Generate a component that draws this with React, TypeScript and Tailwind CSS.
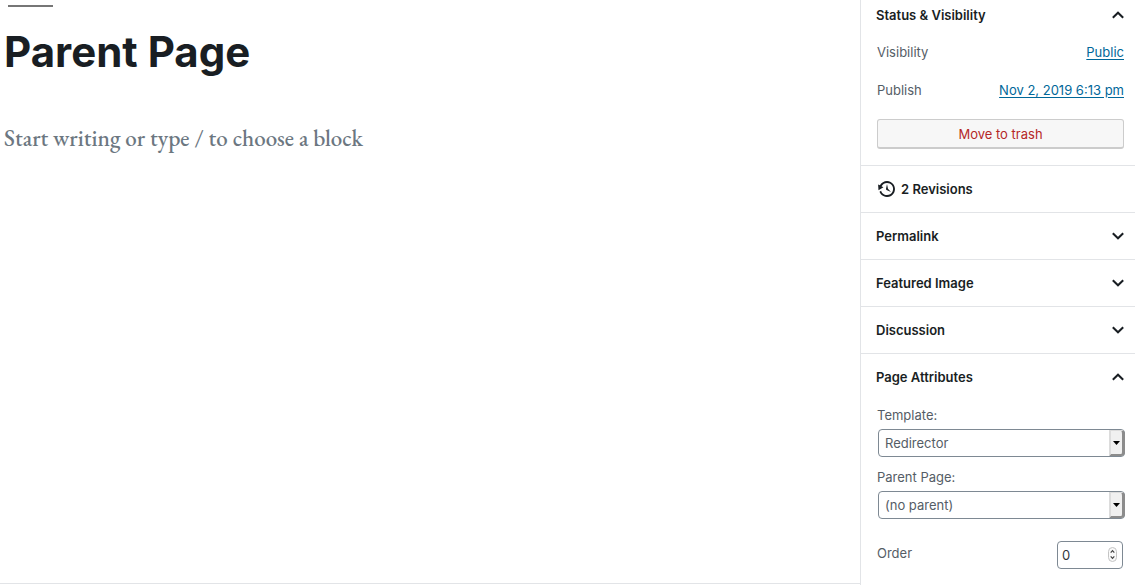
import type { ReactNode } from 'react';

function Chevron({ open = false }: { open?: boolean }) {
  return (
    <svg viewBox="0 0 12 8" className="h-2 w-3 shrink-0" fill="none" stroke="#191e23" strokeWidth="2" aria-hidden="true">
      <path d={open ? 'M.8 6.8 6 1.7l5.2 5.1' : 'M.8 1.2 6 6.3l5.2-5.1'} />
    </svg>
  );
}

function HistoryIcon() {
  return (
    <svg viewBox="0 0 20 20" className="h-5 w-5" fill="#191e23" aria-hidden="true">
      <path d="M13.65 2.88c3.93 2.01 5.48 6.84 3.47 10.77s-6.83 5.48-10.77 3.47c-1.87-.96-3.2-2.56-3.86-4.4l1.64-1.03c.45 1.57 1.52 2.95 3.08 3.76 3.01 1.54 6.69.35 8.23-2.66 1.55-3.01.36-6.69-2.65-8.24C9.78 3.01 6.1 4.2 4.56 7.21l1.88.97-4.95 3.08-.39-5.82 1.78.91C4.9 2.4 9.75.89 13.65 2.88zm-4.36 7.83C9.11 10.53 9 10.28 9 10c0-.07.03-.12.04-.19h-.01L10 5l.97 4.81L14 13l-4.5-2.12.02-.02c-.08-.04-.16-.09-.23-.15z" />
    </svg>
  );
}

function PanelHeader({ title, open = false }: { title: string; open?: boolean }) {
  return (
    <h2>
      <button
        type="button"
        aria-expanded={open}
        className="flex h-[46px] w-full items-center justify-between pr-[11px] pl-[15px] font-semibold text-[#191e23]"
      >
        {title}
        <Chevron open={open} />
      </button>
    </h2>
  );
}

function Row({ label, children }: { label: string; children: ReactNode }) {
  return (
    <div className="flex items-center justify-between">
      <span>{label}</span>
      <a href="#" className="text-[#006799] underline underline-offset-2">{children}</a>
    </div>
  );
}

function SelectField({ id, label, value }: { id: string; label: string; value: string }) {
  return (
    <div>
      <label htmlFor={id} className="block pb-1 leading-5">{label}</label>
      <div className="relative ml-px -mr-px">
        <select
          id={id}
          defaultValue={value}
          className="block h-7 w-full appearance-none rounded-sm border border-[#7e8993] bg-white pr-5 pl-1.5"
        >
          <option>{value}</option>
        </select>
        <span className="pointer-events-none absolute inset-y-px right-0 flex w-4 items-center justify-center rounded-r-sm border-t border-r-3 border-b-2 border-l-2 border-t-[#dcdcdc] border-r-[#8c8c8c] border-b-[#8c8c8c] border-l-[#dcdcdc] bg-[#f0f0f0]">
          <svg viewBox="0 0 7 4" className="h-1 w-[7px] shrink-0" fill="#000" aria-hidden="true">
            <path d="M0 0h7L3.5 4z" />
          </svg>
        </span>
      </div>
    </div>
  );
}

export default function App() {
  return (
    <div className="flex min-h-screen bg-white font-['Inter',sans-serif] text-[13px] leading-5 text-[#555d66]">
      <main className="mb-px min-w-0 flex-1 border-b border-[#e2e4e7] pt-[5px] pl-1">
        <div className="ml-1 h-0.5 w-[45px] bg-[#767676]" />
        <h1 className="pt-[17px] text-[42px] leading-[56px] font-bold text-[#191e23]">Parent Page</h1>
        <p className="pt-11 font-['EB_Garamond','Liberation_Serif',serif] text-[23px] leading-7 font-medium text-[#6c7781]">
          Start writing or type / to choose a block
        </p>
      </main>

      <aside className="w-[275px] shrink-0 border-l border-[#e2e4e7]">
        <section className="border-b border-[#e2e4e7] pb-4">
          <div className="-mt-2">
            <PanelHeader title="Status & Visibility" open />
          </div>
          <div className="pt-1 pr-[11px] pl-4">
            <div className="flex flex-col gap-[18px] pb-[19px]">
              <Row label="Visibility">Public</Row>
              <Row label="Publish">Nov 2, 2019 6:13 pm</Row>
            </div>
            <button
              type="button"
              className="block h-[30px] w-full rounded-[3px] border border-b-2 border-[#cccccc] bg-[#f7f7f7] text-[#b52727]"
            >
              Move to trash
            </button>
          </div>
        </section>

        <section className="border-b border-[#e2e4e7]">
          <button type="button" className="flex h-[46px] w-full items-center gap-1 pl-4 font-semibold text-[#191e23]">
            <HistoryIcon />
            2 Revisions
          </button>
        </section>

        {['Permalink', 'Featured Image', 'Discussion'].map((title) => (
          <section key={title} className="border-b border-[#e2e4e7]">
            <PanelHeader title={title} />
          </section>
        ))}

        <section>
          <PanelHeader title="Page Attributes" open />
          <div className="flex flex-col gap-2.5 pt-[5px] pr-[11px] pl-4">
            <SelectField id="template" label="Template:" value="Redirector" />
            <SelectField id="parent" label="Parent Page:" value="(no parent)" />
            <div className="mt-3 flex items-start justify-between pr-px">
              <label htmlFor="order" className="leading-6">Order</label>
              <div className="relative">
                <input
                  id="order"
                  type="text"
                  inputMode="numeric"
                  defaultValue="0"
                  className="block h-7 w-[66px] rounded-sm border border-[#7e8993] bg-white pl-1 text-[#32373c]"
                />
                <svg
                  viewBox="0 0 9 15"
                  className="pointer-events-none absolute top-[6px] right-[6px] h-[15px] w-[9px]"
                  fill="none"
                  aria-hidden="true"
                >
                  <rect x=".5" y=".5" width="8" height="14" rx="4" fill="#fafafa" stroke="#c4c4c4" />
                  <path d="M2.7 5.6 4.5 3.7l1.8 1.9M2.7 9.4l1.8 1.9 1.8-1.9" stroke="#444" strokeWidth="1.2" />
                </svg>
              </div>
            </div>
          </div>
        </section>
      </aside>
    </div>
  );
}
